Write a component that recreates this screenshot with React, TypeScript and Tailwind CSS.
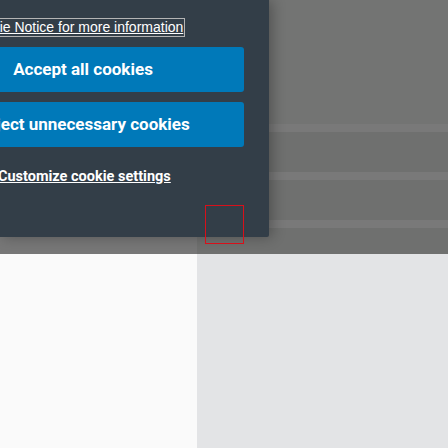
export default function App() {
  return (
    <div className="relative w-[448px] h-[448px] overflow-hidden font-['Liberation_Sans',Arial,sans-serif]">
      <div className="flex flex-col h-full">
        <div className="h-[254px] flex">
          <div className="w-[197px] bg-[#777777]" />
          <div className="flex-1 flex flex-col bg-[#6f706f]">
            <div className="h-[124px] bg-[#737473]" />
            <div className="h-[8px] bg-[#797979]" />
            <div className="h-[40px]" />
            <div className="h-[8px] bg-[#797979]" />
            <div className="h-[40px]" />
            <div className="h-[8px] bg-[#797979]" />
          </div>
        </div>
        <div className="flex-1 flex">
          <div className="w-[197px] bg-[#fafafa]" />
          <div className="flex-1 bg-[#e3e4e6]" />
        </div>
      </div>

      <div className="absolute left-0 top-0 w-[269px] h-[237px] bg-[#333e48] overflow-hidden shadow-[3px_0_14px_rgba(0,0,0,0.3)] rounded-br-[2px]">
        <div className="flex flex-col items-start">
          <a className="mt-[18px] ml-[-35px] border border-[#b4b4b4] px-[1px] h-[19px] text-[14px] leading-[17px] text-white underline whitespace-nowrap">
            Cookie Notice for more information
          </a>
          <button className="mt-[10px] ml-[-78px] w-[322px] h-[45px] bg-[#0079b9] rounded-[3px] text-white font-bold text-[17px] font-['Roboto',sans-serif] whitespace-nowrap">
            Accept all cookies
          </button>
          <button className="mt-[10px] ml-[-78px] w-[322px] h-[45px] bg-[#0079b9] rounded-[3px] text-white font-bold text-[17px] font-['Roboto',sans-serif] whitespace-nowrap">
            Reject unnecessary cookies
          </button>
          <a className="mt-[21px] ml-[-2px] text-[14.5px] leading-[17px] font-bold font-['Roboto',sans-serif] text-white underline whitespace-nowrap">
            Customize cookie settings
          </a>
        </div>
      </div>

      <div className="absolute left-[205px] top-[205px] w-[39px] h-[39px] border border-[#d8101a]" />
    </div>
  );
}
